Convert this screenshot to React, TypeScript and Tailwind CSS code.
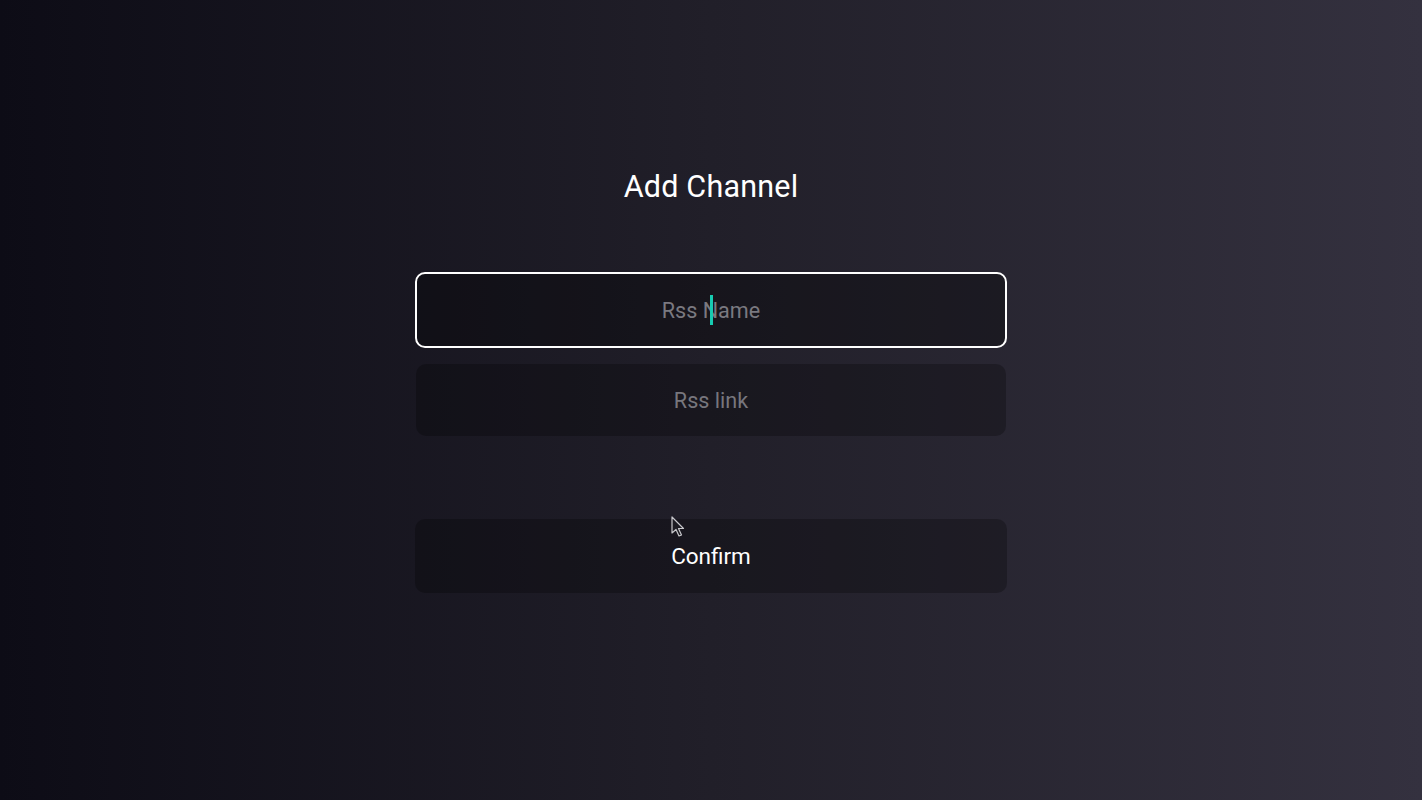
import { useState } from "react";

export default function App() {
  const [name, setName] = useState("");
  const [link, setLink] = useState("");

  return (
    <div
      className="min-h-[800px] w-full bg-gradient-to-r from-[#0d0c16] via-[#211f29] to-[#34313f] text-white flex flex-col items-center pt-[169px] relative overflow-hidden"
      style={{ fontFamily: "Roboto, 'Liberation Sans', sans-serif" }}
    >
      {/* Title */}
      <h1 className="text-[30.5px] leading-[36px] font-normal tracking-[0.2px] text-white">Add Channel</h1>

      {/* Form */}
      <div className="mt-[67px] w-[592px] flex flex-col">
        <div className="relative h-[76px] rounded-[10px] border-[2.5px] border-white bg-black/30">
          <input
            value={name}
            onChange={(e) => setName(e.target.value)}
            placeholder="Rss Name"
            className="w-full h-full bg-transparent text-center text-[21.6px] text-white placeholder:text-[#7a7980] outline-none caret-transparent"
          />
          <span className="absolute left-[293px] top-[21px] h-[30px] w-[3px] bg-[#17cbb1]" />
        </div>

        <div className="mt-[16px] h-[72px] mx-[1px] rounded-[10px] bg-black/25">
          <input
            value={link}
            onChange={(e) => setLink(e.target.value)}
            placeholder="Rss link"
            className="w-full h-full bg-transparent text-center text-[21.6px] text-white placeholder:text-[#77767d] outline-none"
          />
        </div>

        <button className="mt-[83px] h-[74px] rounded-[10px] bg-black/25 text-[22.5px] text-white flex items-center justify-center pt-[2px]">
          Confirm
        </button>
      </div>

      {/* Mouse pointer */}
      <svg
        className="absolute left-[671px] top-[516px]"
        width="14"
        height="22"
        viewBox="0 0 14 22"
      >
        <path
          d="M1 1 L1 17 L5 13.5 L8 20 L10.5 19 L7.5 12.5 L12.5 12.5 Z"
          fill="#1c1b22"
          stroke="#c8c8cc"
          strokeWidth="1.2"
          strokeLinejoin="round"
        />
      </svg>
    </div>
  );
}
